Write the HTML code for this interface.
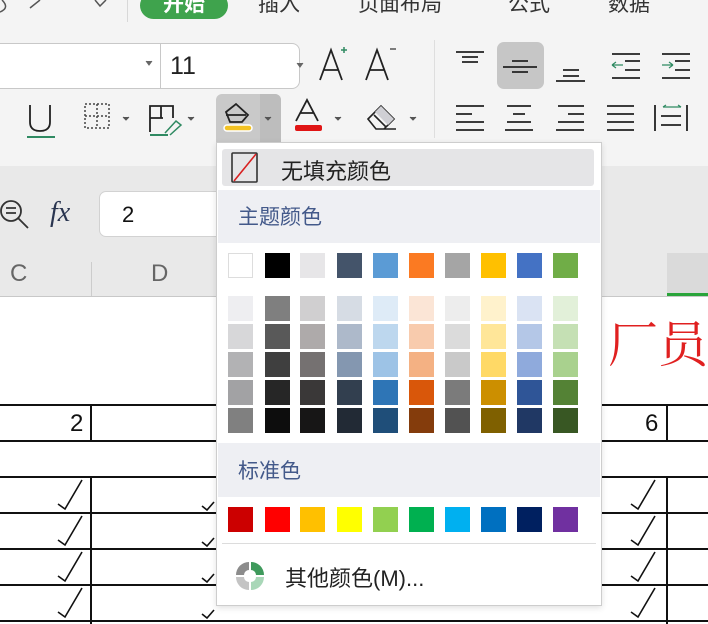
<!DOCTYPE html>
<html><head><meta charset="utf-8"><style>
*{margin:0;padding:0;box-sizing:border-box}
body{width:708px;height:624px;overflow:hidden;position:relative;background:#fff;font-family:"Liberation Sans","Noto Sans CJK SC",sans-serif}
.a{position:absolute}
.sw{position:absolute;width:25px;height:25px}
</style></head><body>
<div class="a" style="left:0;top:0;width:708px;height:166px;background:#f4f4f4"></div>
<div class="a" style="left:0;top:166px;width:708px;height:131px;background:#e9e9e9"></div>
<div class="a" style="left:0;top:296px;width:708px;height:1px;background:#c8c8c8"></div>
<!-- tabs -->
<div class="a" style="left:140px;top:-8px;width:88px;height:27px;border-radius:14px;background:#3fa34d"></div>
<div class="a" style="left:140px;top:-12px;width:88px;text-align:center;color:#fff;font-weight:bold;font-size:21px">开始</div>
<div class="a" style="left:258px;top:-12px;font-size:21px;color:#333">插入</div>
<div class="a" style="left:358px;top:-12px;font-size:21px;color:#333">页面布局</div>
<div class="a" style="left:508px;top:-12px;font-size:21px;color:#333">公式</div>
<div class="a" style="left:608px;top:-12px;font-size:21px;color:#333">数据</div>
<div class="a" style="left:127px;top:0;width:1px;height:22px;background:#d8d8d8"></div>
<div class="a" style="left:434px;top:40px;width:1px;height:98px;background:#dedede"></div>
<!-- font box -->
<div class="a" style="left:-10px;top:43px;width:310px;height:46px;background:#fff;border:1px solid #c8c8c8;border-radius:8px"></div>
<div class="a" style="left:160px;top:43px;width:1px;height:46px;background:#c8c8c8"></div>
<div class="a" style="left:170px;top:52px;font-size:25px;color:#222">11</div>
<!-- fill btn -->
<div class="a" style="left:216px;top:94px;width:65px;height:48px;background:#c9c9c9;border-radius:6px 6px 0 0"></div>
<div class="a" style="left:260px;top:94px;width:21px;height:48px;background:#bdbdbd;border-radius:0 6px 0 0"></div>
<div class="a" style="left:497px;top:42px;width:47px;height:47px;background:#c6c6c6;border-radius:7px"></div>
<svg class="a" style="left:0;top:0" width="708" height="160" fill="none" stroke="#222" stroke-width="2">
<path d="M2 0 Q10 8 0 12 M40 0 L30 8 M95 0 L100 6 L106 0" stroke="#555" stroke-width="1.5"/>
<path d="M146 61 l3 4 l3 -4 M297 63 l3 4 l3 -4" stroke="#666" fill="#666" stroke-width="1"/>
<path d="M320 80 L331 50 L342 80 M324 70 H338 M424 60" stroke-width="1.8"/>
<path d="M341 50 h6 M344 47 v6" stroke="#2f8a62" stroke-width="1.5"/>
<path d="M366 80 L377 50 L388 80 M370 70 H384" stroke-width="1.8"/>
<path d="M390 49 h6" stroke="#555" stroke-width="1.5"/>
<path d="M30 105 V122 Q30 131 40 131 Q50 131 50 122 V105" stroke-width="1.8"/>
<path d="M27 137 H55" stroke="#2f8a62" stroke-width="2"/>
<path d="M85 104 H109 V128 H85 Z M97 104 V128 M85 116 H109" stroke="#444" stroke-width="1.5" stroke-dasharray="2 2"/>
<path d="M123 117 l3 3 l3 -3 M188 117 l3 3 l3 -3 M265 117 l3 3 l3 -3 M335 117 l3 3 l3 -3 M410 117 l3 3 l3 -3" stroke="#555" fill="#555" stroke-width="1"/>
<path d="M150 132 V106 H173 V118 M150 118 H163 M161 106 V118" stroke-width="1.8"/>
<path d="M165 133 L176 121 L181 125 L170 135" stroke="#2f8a62" stroke-width="1.5"/>
<path d="M150 135 H168" stroke="#2f8a62" stroke-width="2"/>
<path d="M226 112 L236 104 L248 115 L242 122 H230 Z M226 115 H246" stroke-width="1.8"/>
<rect x="224" y="125" width="28" height="6" rx="3" fill="#f2c224" stroke="#fff" stroke-width="1.5"/>
<path d="M296 121 L307 100 L318 121 M300 113 H314" stroke-width="1.8"/>
<rect x="295" y="125" width="27" height="6" rx="2" fill="#e01515" stroke="none"/>
<path d="M368 119 L381 106 L394 119 L384 129 H376 Z M374 115 L386 127 M376 129 H396" stroke-width="1.6"/>
<path d="M381 106 L394 119 L388 125 L375 112 Z" fill="#cfcfd4" stroke="none"/>
<g stroke-width="1.8">
<path d="M456 52 H484 M462 57 H478 M462 62 H478"/>
<path d="M512 61 H528 M503 67 H537 M512 72 H528"/>
<path d="M563 70 H579 M563 76 H579 M556 81 H585"/>
<path d="M612 54 H640 M625 61 H640 M625 70 H640 M612 78 H640"/>
<path d="M662 54 H690 M675 61 H690 M675 70 H690 M662 78 H690"/>
<path d="M456 106 H484 M456 114 H472 M456 122 H484 M456 130 H484"/>
<path d="M507 106 H531 M513 114 H525 M507 122 H531 M505 130 H533"/>
<path d="M558 106 H584 M568 114 H584 M558 122 H584 M556 130 H584"/>
<path d="M607 106 H634 M607 114 H634 M607 122 H634 M607 130 H634"/>
<path d="M655 105 V131 M687 105 V131 M661 116 H681 M661 125 H681"/>
</g>
<path d="M612 65 H623 M612 65 l4 -3 M612 65 l4 3 M662 65 H673 M673 65 l-4 -3 M673 65 l-4 3 M663 107 h18 M663 107 l3 -2 M681 107 l-3 -2" stroke="#2f8a62" stroke-width="1.2"/>
</svg>
<!-- formula bar -->
<svg class="a" style="left:0;top:195px" width="90" height="40" fill="none" stroke="#333" stroke-width="1.8">
<circle cx="11" cy="16" r="10"/><path d="M18 23 L28 33 M6 13 H16 M6 18 H16" />
</svg>
<div class="a" style="left:50px;top:197px;font-family:'Liberation Serif',serif;font-style:italic;font-size:28px;color:#2a3550">fx</div>
<div class="a" style="left:99px;top:191px;width:140px;height:46px;background:#fff;border:1px solid #d2d2d2;border-radius:7px"></div>
<div class="a" style="left:122px;top:202px;font-size:22px;color:#111">2</div>
<div class="a" style="left:10px;top:260px;font-size:24px;color:#666">C</div>
<div class="a" style="left:151px;top:260px;font-size:24px;color:#666">D</div>
<div class="a" style="left:91px;top:262px;width:1px;height:34px;background:#ccc"></div>
<div class="a" style="left:667px;top:253px;width:41px;height:43px;background:#dadada"></div>
<div class="a" style="left:667px;top:293px;width:41px;height:3px;background:#2aa43a"></div>
<!-- sheet -->
<div class="a" style="left:608px;top:305px;font-size:50px;color:#e02020;font-family:'Noto Serif CJK SC',serif">厂员</div>
<div class="a" style="left:0;top:404px;width:708px;height:2px;background:#111"></div>
<div class="a" style="left:0;top:440px;width:708px;height:2px;background:#111"></div>
<div class="a" style="left:0;top:476px;width:708px;height:2px;background:#111"></div>
<div class="a" style="left:0;top:512px;width:708px;height:2px;background:#111"></div>
<div class="a" style="left:0;top:548px;width:708px;height:2px;background:#111"></div>
<div class="a" style="left:0;top:584px;width:708px;height:2px;background:#111"></div>
<div class="a" style="left:0;top:620px;width:708px;height:2px;background:#111"></div>
<div class="a" style="left:90px;top:404px;width:2px;height:38px;background:#111"></div>
<div class="a" style="left:90px;top:476px;width:2px;height:148px;background:#111"></div>
<div class="a" style="left:666px;top:404px;width:2px;height:38px;background:#111"></div>
<div class="a" style="left:666px;top:476px;width:2px;height:148px;background:#111"></div>
<div class="a" style="left:70px;top:410px;font-size:24px;color:#111">2</div>
<div class="a" style="left:645px;top:410px;font-size:24px;color:#111">6</div>
<svg class="a" style="left:0;top:476px" width="708" height="148" fill="none" stroke="#111" stroke-width="1.6">
<g id="c"><path d="M58 28 L65 33 L82 4"/><path d="M58 64 L65 69 L82 40"/><path d="M58 100 L65 105 L82 76"/><path d="M58 136 L65 141 L82 112"/></g>
<path d="M631 28 L638 33 L655 4 M631 64 L638 69 L655 40 M631 100 L638 105 L655 76 M631 136 L638 141 L655 112"/>
<path d="M202 30 L207 34 L214 26 M202 66 L207 70 L214 62 M202 102 L207 106 L214 98 M202 138 L207 142 L214 134"/>
</svg>
<!-- dropdown -->
<div class="a" style="left:216px;top:142px;width:386px;height:464px;background:#fff;border:1px solid #cdcdcd;box-shadow:0 2px 6px rgba(0,0,0,.12)"></div>
<div class="a" style="left:222px;top:149px;width:372px;height:37px;background:#e5e5e7;border-radius:3px"></div>
<svg class="a" style="left:231px;top:152px" width="30" height="32"><rect x="1" y="1" width="25" height="29" fill="none" stroke="#333" stroke-width="1.6" rx="1"/><path d="M3 29 L25 2" stroke="#d82020" stroke-width="1.6"/></svg>
<div class="a" style="left:281px;top:154px;font-size:22px;color:#222">无填充颜色</div>
<div class="a" style="left:218px;top:190px;width:382px;height:53px;background:#eeeff3"></div>
<div class="a" style="left:238px;top:201px;font-size:21px;color:#43598a">主题颜色</div>
<div class="a" style="left:218px;top:443px;width:382px;height:54px;background:#eeeff3"></div>
<div class="a" style="left:238px;top:455px;font-size:21px;color:#43598a">标准色</div>
<div class="a" style="left:222px;top:543px;width:374px;height:1px;background:#dcdcdc"></div>
<svg class="a" style="left:234px;top:560px" width="32" height="32">
<path d="M15 2 A13 13 0 0 0 2 15 H10 A5 5 0 0 1 15 10 Z" fill="#8c8c8c"/>
<path d="M17 2 A13 13 0 0 1 30 15 H22 A5 5 0 0 0 17 10 Z" fill="#3f9a5c"/>
<path d="M2 17 A13 13 0 0 0 15 30 V22 A5 5 0 0 1 10 17 Z" fill="#c4c4c4"/>
<path d="M30 17 A13 13 0 0 1 17 30 V22 A5 5 0 0 0 22 17 Z" fill="#a9d7b8"/>
</svg>
<div class="a" style="left:285px;top:561px;font-size:22px;color:#222">其他颜色(M)...</div>
<div id="sw"></div>
<script>
var xs=[228,265,300,337,373,409,445,481,517,553];
var top1=["#ffffff","#000000","#e7e6e8","#44546a","#5b9bd5","#fb7a22","#a5a5a5","#ffc000","#4472c4","#70ad47"];
var g=[["#eeeef1","#d7d7d9","#b2b2b4","#a2a2a4","#808080"],["#7f7f7f","#595959","#3f3f3f","#262626","#0d0d0d"],["#d0cfd0","#aeaaaa","#757171","#3a3838","#171616"],["#d6dce4","#adb9ca","#8497b0","#323f4f","#222a35"],["#deebf7","#bdd7ee","#9dc3e6","#2e75b6","#1f4e79"],["#fbe5d6","#f8cbad","#f4b183","#d9570a","#843c0c"],["#ededed","#dbdbdb","#c9c9c9","#7b7b7b","#525252"],["#fff2cc","#ffe699","#ffd966","#cc8f00","#7f6000"],["#dae3f3","#b4c7e7","#8faadc","#2f5597","#203864"],["#e2f0d9","#c5e0b4","#a9d18e","#548235","#385723"]];
var st=["#cc0000","#ff0000","#ffc000","#ffff00","#92d050","#00b050","#00b0f0","#0070c0","#002060","#7030a0"];
var h="";
for(var i=0;i<10;i++){
h+='<div class="sw" style="left:'+xs[i]+'px;top:253px;background:'+top1[i]+(i==0?';border:1px solid #ddd':'')+'"></div>';
for(var r=0;r<5;r++)h+='<div class="sw" style="left:'+xs[i]+'px;top:'+(296+r*28)+'px;background:'+g[i][r]+'"></div>';
h+='<div class="sw" style="left:'+xs[i]+'px;top:507px;background:'+st[i]+'"></div>';
}
document.getElementById("sw").innerHTML=h;
</script>
</body></html>
